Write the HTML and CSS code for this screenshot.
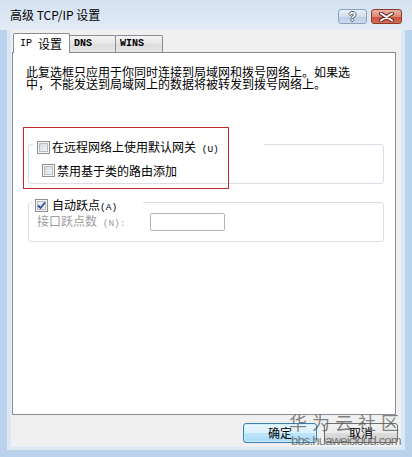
FILE: index.html
```html
<!DOCTYPE html>
<html lang="zh-CN">
<head>
<meta charset="utf-8">
<title>高级 TCP/IP 设置</title>
<link rel="stylesheet" href="styles.css">
</head>
<body>
<div class="window">
  <div class="titlebar">
    <div class="title">高级 TCP/IP 设置</div>
    <div class="caption-btns">
      <div class="cbtn help"><span>?</span></div>
      <div class="cbtn close">
        <svg width="17" height="10" viewBox="0 0 17 10">
          <path d="M3 1.5 L14 8.5 M14 1.5 L3 8.5" stroke="#6e2a22" stroke-width="4" stroke-linecap="round" fill="none"/>
          <path d="M3 1.5 L14 8.5 M14 1.5 L3 8.5" stroke="#ffffff" stroke-width="2" stroke-linecap="round" fill="none"/>
        </svg>
      </div>
    </div>
  </div>
  <div class="frame">
    <div class="client">
      <div class="tabs">
        <div class="tab sel"><span class="mono">IP </span>设置</div>
        <div class="tab dns"><span class="mono b">DNS</span></div>
        <div class="tab wins"><span class="mono b">WINS</span></div>
      </div>
      <div class="panel">
        <p class="desc">此复选框只应用于你同时连接到局域网和拨号网络上。如果选<br>中，不能发送到局域网上的数据将被转发到拨号网络上。</p>
        <div class="group g1">
          <div class="legend l1"><span class="cb"></span><span class="lbl">在远程网络上使用默认网关<span class="mono sm"> (U)</span></span></div>
          <div class="row r2"><span class="cb"></span><span class="lbl">禁用基于类的路由添加</span></div>
        </div>
        <div class="group g2">
          <div class="legend l2"><span class="cb checked"><svg width="11" height="11" viewBox="0 0 11 11"><path d="M2 5.5 L4.5 8 L9 2.5" stroke="#2d4c9e" stroke-width="1.8" fill="none"/></svg></span><span class="lbl">自动跃点<span class="mono sm">(A)</span></span></div>
          <div class="row r3"><span class="dis">接口跃点数<span class="mono sm"> (N):</span></span><span class="input"></span></div>
        </div>
        <div class="redbox"></div>
      </div>
      <div class="buttons">
        <div class="btn default">确定</div>
        <div class="btn">取消</div>
      </div>
    </div>
  </div>
  <div class="watermark">华 为 云 社 区</div>
  <div class="wm-url">bbs.huaweicloud.com</div>
</div>
</body>
</html>
```
FILE: styles.css
```css
* { box-sizing: border-box; }
html, body { margin: 0; padding: 0; }
body {
  font-family: "Noto Sans CJK SC", sans-serif;
  font-size: 12px;
  color: #000;
  background: #fff;
}
.window {
  position: relative;
  width: 412px;
  height: 457px;
  display: flex;
  flex-direction: column;
  background: #bad2ec;
  overflow: hidden;
}
.titlebar {
  height: 30px;
  flex: none;
  display: flex;
  align-items: flex-start;
  padding: 0 10px 0 10px;
  background: linear-gradient(#d5e2f1, #e2ebf6);
}
.title {
  margin-top: 7px;
  line-height: 16px;
  font-size: 12px;
}
.caption-btns {
  margin-left: auto;
  margin-top: 9px;
  display: flex;
  gap: 4px;
}
.cbtn {
  height: 15px;
  border-radius: 3px;
  display: flex;
  align-items: center;
  justify-content: center;
}
.help {
  width: 29px;
  border: 1px solid #8ba2be;
  background: linear-gradient(#e9f0f8, #d3dfec 50%, #bccde2 51%, #cddbec);
}
.help span {
  font-family: "Liberation Sans", sans-serif;
  font-weight: bold;
  font-size: 12px;
  line-height: 12px;
  color: #fff;
  text-shadow: 1px 0 #4f5d70, -1px 0 #4f5d70, 0 1px #4f5d70, 0 -1px #4f5d70;
}
.close {
  width: 31px;
  border: 1px solid #8b392e;
  background: linear-gradient(#ebb3a5, #dc8a78 50%, #c9513d 51%, #d76e57);
}
.close svg { display: block; }
.frame {
  flex: 1;
  display: flex;
  padding: 0 7px 7px 7px;
}
.client {
  flex: 1;
  display: flex;
  flex-direction: column;
  border-style: solid;
  border-color: #dce7f4;
  border-width: 0 4px 3px 4px;
  background: #f0f0f0;
  padding: 3px 3px 0 1px;
}
.tabs {
  display: flex;
  align-items: flex-end;
  height: 19px;
  padding-left: 1px;
}
.tab {
  border: 1px solid #898c95;
  border-bottom: none;
  display: flex;
  align-items: center;
  line-height: 14px;
  border-radius: 2px 2px 0 0;
  white-space: pre;
}
.tab.sel {
  position: relative;
  z-index: 1;
  width: 57px;
  height: 20px;
  margin-bottom: -1px;
  padding-left: 6px;
  background: #fff;
}
.tab.dns, .tab.wins {
  height: 17px;
  margin-left: -1px;
  padding-left: 4px;
  background: linear-gradient(#f4f4f4, #e6e6e6 50%, #dcdcdc 51%, #e8e8e8);
}
.tab.dns { width: 47px; }
.tab.wins { width: 48px; }
.mono {
  font-family: "Liberation Mono", monospace;
  font-size: 10px;
}
.mono.b { font-weight: bold; }
.mono.sm { font-size: 9.5px; }
.panel {
  position: relative;
  width: 384px;
  height: 363px;
  border: 1px solid #898c95;
  background: #fff;
  padding: 13px 10px 0 13px;
}
.desc {
  margin: 0;
  line-height: 12px;
  white-space: nowrap;
}
.group {
  width: 356px;
  margin-left: 2px;
  border: 1px solid #d5dfe5;
  border-radius: 3px;
}
.g1 { margin-top: 54px; padding-bottom: 6px; }
.g2 { margin-top: 18px; padding-bottom: 10px; }
.legend {
  display: flex;
  align-items: center;
  height: 13px;
  margin-top: -4px;
  margin-left: 4px;
  background: #fff;
}
.l1 { width: 231px; padding-left: 4px; gap: 2px; }
.l2 { width: 110px; padding-left: 2px; gap: 4px; }
.lbl { line-height: 13px; white-space: nowrap; }
.row {
  display: flex;
  align-items: center;
}
.r2 {
  margin-top: 10px;
  height: 13px;
  padding-left: 13px;
  gap: 2px;
}
.r3 {
  margin-top: 1px;
  padding-left: 8px;
}
.dis {
  width: 113px;
  color: #a0a0a0;
  line-height: 13px;
  white-space: nowrap;
}
.input {
  width: 75px;
  height: 18px;
  border: 1px solid #b5b5b5;
  border-radius: 2px;
  background: #fff;
}
.cb {
  flex: none;
  width: 13px;
  height: 13px;
  border: 1px solid #8e8f8f;
  background: linear-gradient(135deg, #cfd3d8, #eef0f2 70%, #f8f8f8);
  box-shadow: inset 0 0 0 1px #f6f6f6, inset 0 0 0 2px #b8bcc2;
  display: flex;
  align-items: center;
  justify-content: center;
}
.cb.checked {
  background: linear-gradient(135deg, #dfe3e8, #f6f7f8);
}
.cb svg { display: block; }
.redbox {
  position: absolute;
  left: 10px;
  top: 74px;
  width: 206px;
  height: 62px;
  border: 1px solid #c1272d;
}
.buttons {
  display: flex;
  justify-content: flex-end;
  gap: 7px;
  margin-top: 8px;
}
.btn {
  width: 74px;
  height: 20px;
  border: 1px solid #707070;
  border-radius: 3px;
  background: linear-gradient(#f2f2f2, #ebebeb 50%, #dddddd 51%, #cfcfcf);
  display: flex;
  align-items: center;
  justify-content: center;
  line-height: 14px;
}
.btn.default {
  border-color: #3c7fb1;
  background: linear-gradient(#eaf6fd, #d9f0fc 50%, #bee6fd 51%, #a7d9f5);
  box-shadow: inset 0 0 0 1px #cdeefd;
}
.watermark {
  position: absolute;
  left: 289px;
  top: 414px;
  font-family: "Liberation Sans", "Noto Sans CJK SC", sans-serif;
  font-size: 18px;
  line-height: 20px;
  letter-spacing: 0;
  color: rgba(85, 85, 85, 0.72);
  white-space: pre;
}
.wm-url {
  position: absolute;
  left: 291px;
  top: 433px;
  font-family: "Liberation Sans", sans-serif;
  font-size: 13px;
  line-height: 15px;
  letter-spacing: -0.8px;
  color: rgba(100, 100, 100, 0.85);
  white-space: nowrap;
}
```
